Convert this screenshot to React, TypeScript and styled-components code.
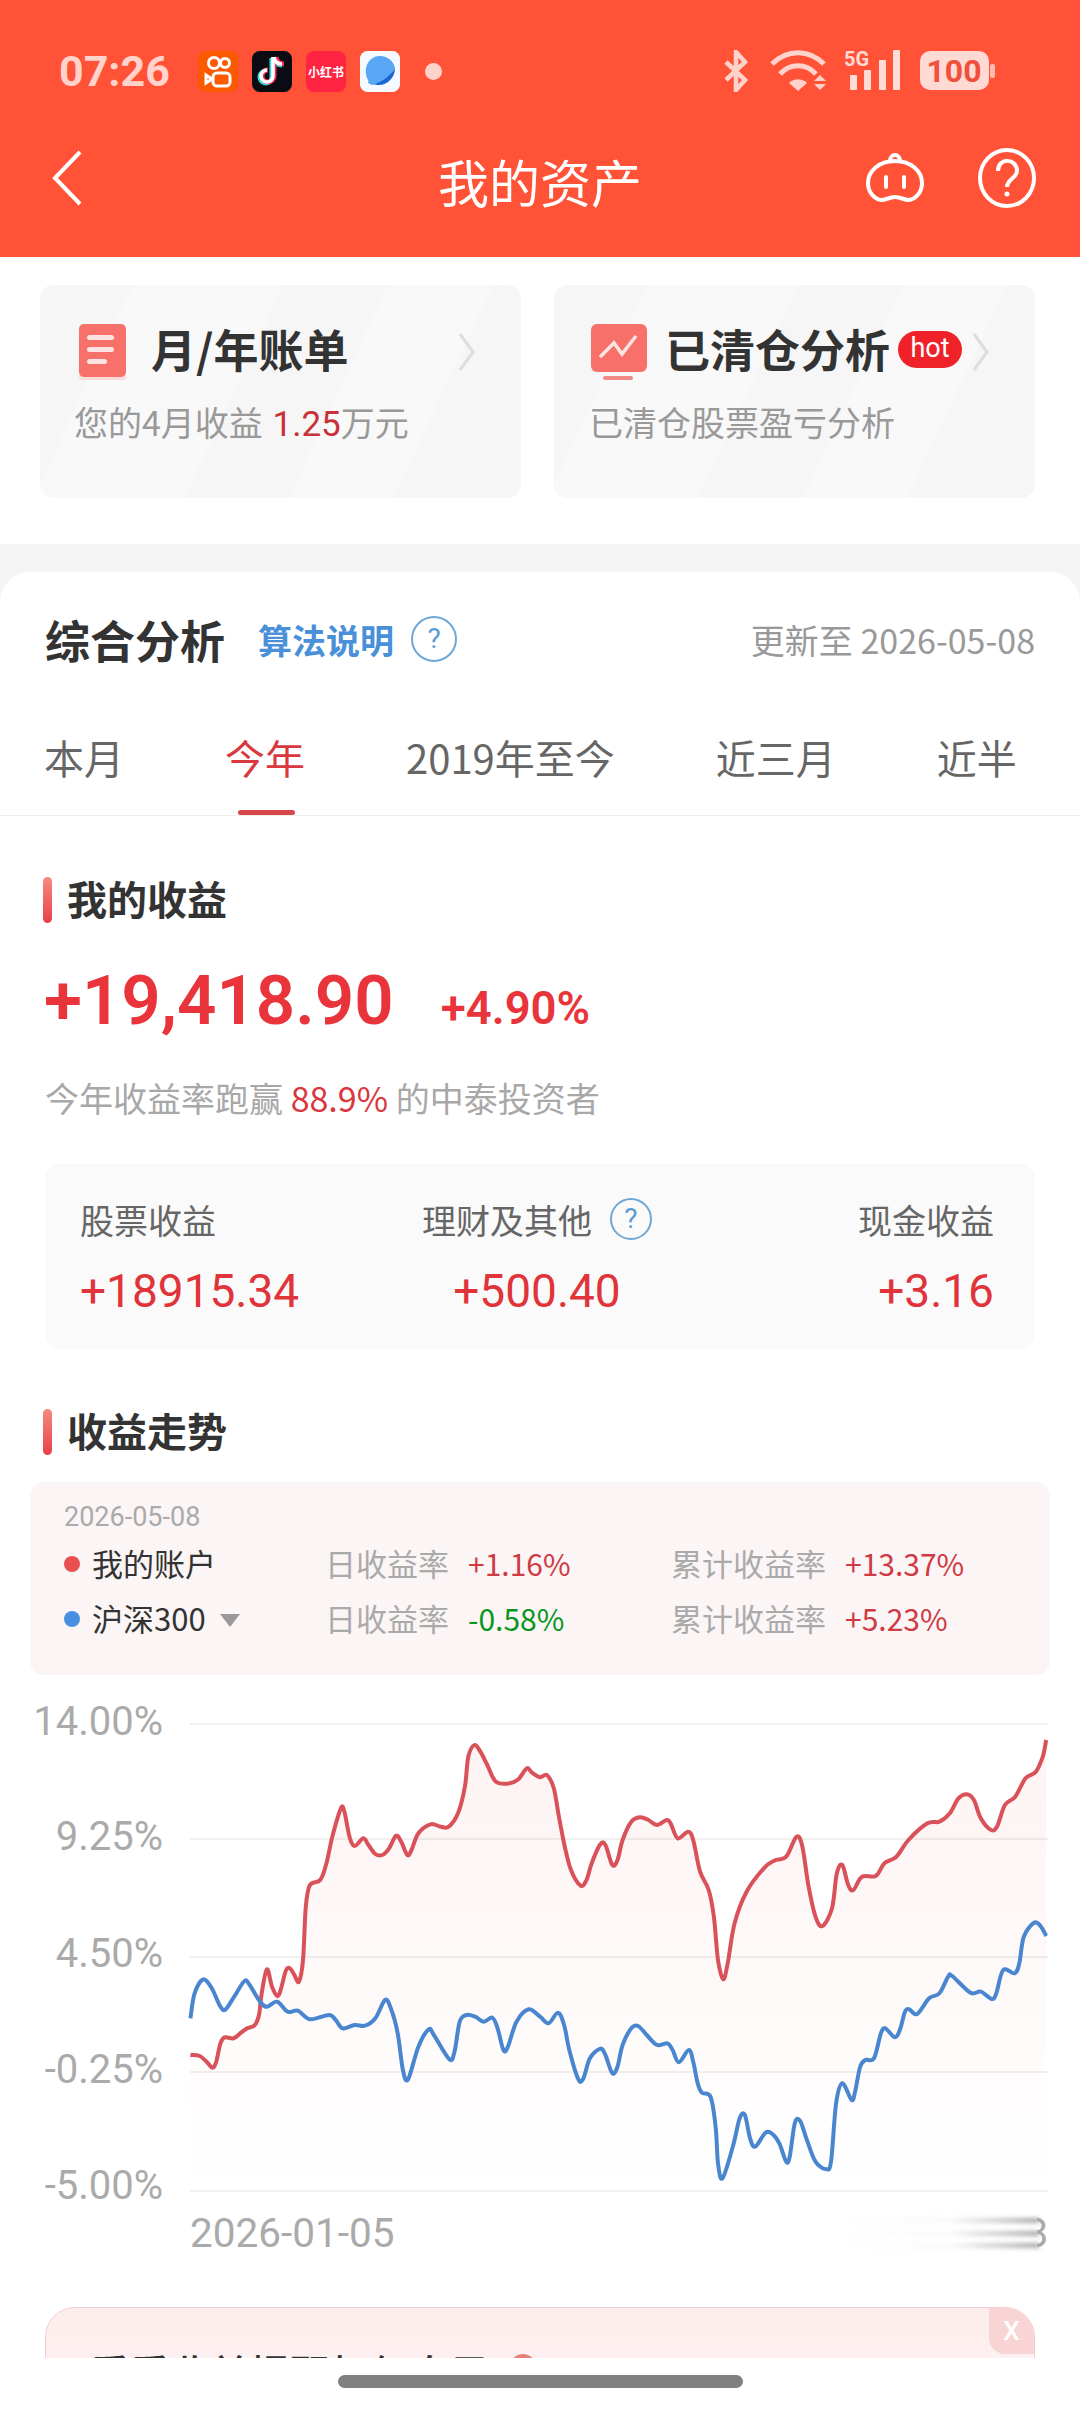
import * as React from 'react';
import styled, { createGlobalStyle } from 'styled-components';

const FONT = `"Noto Sans CJK SC", "Noto Sans", sans-serif`;
const NUM_FONT = `Roboto, "Noto Sans CJK SC", sans-serif`;

const GlobalStyle = createGlobalStyle`
    html, body {
        margin: 0;
        padding: 0;
        background: #fff;
    }
    * {
        box-sizing: border-box;
    }
`

const Page = styled.div`
    width: 1080px;
    height: 2412px;
    display: flex;
    flex-direction: column;
    overflow: hidden;
    background: #fff;
    font-family: ${FONT};
`

const Content = styled.div`
    flex: 1;
    min-height: 0;
    overflow: hidden;
`

const Header = styled.header`
    height: 257px;
    background: #ff5236;
    padding: 50px 44px 0 59px;
    display: flex;
    flex-direction: column;
`

const StatusBar = styled.div`
    height: 42px;
    display: flex;
    align-items: center;
`

const Clock = styled.span`
    font-family: ${NUM_FONT};
    font-size: 43px;
    font-weight: 700;
    color: rgba(255, 255, 255, 0.75);
    width: 139px;
`

const AppIcons = styled.div`
    display: flex;
    gap: 14px;
    align-items: center;
`

const AppIcon = styled.div`
    width: 40px;
    height: 41px;
    border-radius: 8px;
    overflow: hidden;
    display: flex;
    align-items: center;
    justify-content: center;
    font-size: 12px;
    font-weight: 700;
    white-space: nowrap;
    color: #fff;
    background: ${props => props.$color};
`

const StatusDot = styled.span`
    width: 17px;
    height: 17px;
    border-radius: 50%;
    margin-left: 25px;
    background: rgba(255, 255, 255, 0.75);
`

const StatusRight = styled.div`
    margin-left: auto;
    display: flex;
    align-items: center;
    margin-right: 41px;
`

const StatusSlot = styled.span`
    display: flex;
    margin-left: ${props => props.$left}px;
`

const NavBar = styled.nav`
    margin: 53px 0 0 -7px;
    height: 60px;
    display: grid;
    grid-template-columns: 1fr auto 1fr;
    align-items: center;
`

const Title = styled.h1`
    margin: 0 8px 0 0;
    font-size: 51px;
    font-weight: 400;
    color: #fff;
    line-height: 60px;
    padding-top: 6px;
`

const NavRight = styled.div`
    justify-self: end;
    display: flex;
    align-items: center;
    gap: 53px;
`

const CardsSection = styled.section`
    height: 287px;
    padding: 28px 45px 0 40px;
    display: flex;
    gap: 33px;
`

const FeatureCard = styled.div`
    width: 481px;
    height: 213px;
    border-radius: 14px;
    padding: 39px 45px 0 ${props => props.$inset}px;
    background:
        linear-gradient(115deg, transparent 0 60%, rgba(255, 255, 255, 0.28) 60% 78%, transparent 78%),
        linear-gradient(115deg, rgba(255, 255, 255, 0) 0 16%, rgba(255, 255, 255, 0.28) 16% 42%, transparent 42%),
        #f6f6f6;
`

const CardHead = styled.div`
    display: flex;
    align-items: center;
    height: 56px;
`

const CardTitle = styled.span`
    font-size: 45px;
    font-weight: 700;
    line-height: 56px;
    color: #333;
    margin: 0 0 6px ${props => props.$gap}px;
    white-space: nowrap;
`

const HotBadge = styled.span`
    width: 64px;
    height: 37px;
    flex: none;
    border-radius: 19px;
    background: #ee2228;
    color: #fff;
    font-family: ${NUM_FONT};
    font-size: 27px;
    line-height: 34px;
    text-align: center;
    margin: -6px 0 0 8px;
`

const Chevron = styled.svg`
    margin-left: auto;
    flex: none;
`

const CardSub = styled.div`
    margin: 17px 0 0 ${props => props.$left}px;
    font-size: 34px;
    line-height: 50px;
    color: #999;
    white-space: nowrap;
`

const SubAccent = styled.span`
    color: #c6313a;
    font-family: ${NUM_FONT};
    font-size: 35px;
    margin-left: 2px;
`

const Gap = styled.div`
    height: 29px;
    background: #f5f5f5;
`

const Analysis = styled.section`
    margin-top: -1px;
    background: #f5f5f5;
`

const AnalysisInner = styled.div`
    background: #fff;
    border-radius: 30px 30px 0 0;
    padding-top: 34px;
`

const AnalysisHead = styled.div`
    display: flex;
    align-items: center;
    height: 66px;
    padding: 0 45px;
`

const AnalysisTitle = styled.h2`
    margin: 0;
    font-size: 45px;
    font-weight: 700;
    color: #333;
`

const AlgoLink = styled.span`
    margin-left: 33px;
    font-size: 34px;
    font-weight: 700;
    color: #4a90d9;
`

const HelpCircle = styled.span`
    width: ${props => props.$size}px;
    height: ${props => props.$size}px;
    margin-left: ${props => props.$left}px;
    border-radius: 50%;
    border: 2px solid #6fa8d6;
    color: #5b9bd5;
    font-family: ${NUM_FONT};
    font-size: 28px;
    line-height: ${props => props.$size - 4}px;
    text-align: center;
    flex: none;
`

const UpdatedAt = styled.span`
    margin-left: auto;
    font-size: 34px;
    color: #999;
`

const Tabs = styled.div`
    margin-top: 55px;
    height: 89px;
    padding-left: 44px;
    display: flex;
    gap: 101px;
    border-bottom: 1px solid #eee;
    overflow: hidden;
    white-space: nowrap;
`

const Tab = styled.div`
    position: relative;
    font-size: 40px;
    line-height: 60px;
    flex: none;
    color: ${props => (props.$active ? '#d8383e' : '#666')};
    ${props => props.$active && `
        &::after {
            content: '';
            position: absolute;
            left: 13px;
            right: 10px;
            top: 83px;
            height: 5px;
            border-radius: 3px;
            background: #d8484a;
        }
    `}
`

const Block = styled.div`
    padding: 0 45px;
`

const SectionTitle = styled.div`
    display: flex;
    align-items: center;
    height: 46px;
    padding-bottom: 5px;
    margin-top: ${props => props.$top}px;
    font-size: 40px;
    font-weight: 700;
    color: #333;
    &::before {
        content: '';
        align-self: flex-start;
        width: 9px;
        height: 46px;
        margin: 0 15px 0 -2px;
        border-radius: 5px;
        background: linear-gradient(180deg, #f58a80, #e8404a);
    }
`

const BigRow = styled.div`
    display: flex;
    align-items: baseline;
    margin: 38px 0 0 -1px;
    height: 80px;
    line-height: 80px;
    font-family: ${NUM_FONT};
    color: #e8343a;
    font-weight: 600;
`

const BigNumber = styled.span`
    font-size: 69px;
`

const BigPercent = styled.span`
    font-size: 45.5px;
    margin-left: 47px;
`

const Beat = styled.div`
    margin-top: 32px;
    font-size: 34px;
    line-height: 50px;
    color: #a8a8a8;
`

const BeatAccent = styled.span`
    color: #d8383e;
`

const StatsBox = styled.div`
    margin-top: 41px;
    height: 185px;
    border-radius: 14px;
    background: #fafafa;
    padding: 30px 41px 0 35px;
    display: grid;
    grid-template-columns: repeat(3, 1fr);
`

const Stat = styled.div`
    display: flex;
    flex-direction: column;
    align-items: ${props => props.$align};
`

const StatLabel = styled.div`
    display: flex;
    align-items: center;
    height: 50px;
    font-size: 34px;
    color: #666;
`

const StatValue = styled.div`
    margin-top: 20px;
    font-family: ${NUM_FONT};
    font-size: 46px;
    line-height: 54px;
    color: #e0343a;
`

const LegendCard = styled.div`
    margin: 27px 30px 0;
    height: 193px;
    border-radius: 14px;
    background: #fbf5f5;
    padding: 17px 0 0 34px;
`

const LegendDate = styled.div`
    font-family: ${NUM_FONT};
    font-size: 27px;
    line-height: 36px;
    color: #aaa;
`

const LegendRow = styled.div`
    display: grid;
    grid-template-columns: 261px 346px 1fr;
    height: 55px;
    align-items: center;
    font-size: 31px;
`

const LegendName = styled.div`
    display: flex;
    align-items: center;
    color: #333;
`

const LegendDot = styled.span`
    width: 16px;
    height: 16px;
    border-radius: 50%;
    margin: 3px 12px 0 0;
    background: ${props => props.$color};
`

const DropTriangle = styled.span`
    width: 0;
    height: 0;
    margin: 6px 0 0 14px;
    border-left: 10px solid transparent;
    border-right: 10px solid transparent;
    border-top: 13px solid #999;
`

const LegendMetric = styled.div`
    display: flex;
    align-items: center;
    gap: 19px;
    color: #aaa;
`

const MetricValue = styled.span`
    font-size: 30px;
    color: ${props => (props.$down ? '#0a961e' : '#d03a44')};
`

const ChartWrap = styled.div`
    height: 605px;
    margin-top: 25px;
`

const ChartSvg = styled.svg`
    display: block;
`

const Banner = styled.div`
    margin: 2px 45px 0;
    height: 120px;
    border: 1px solid #f6cdcd;
    border-radius: 30px 30px 0 0;
    background: linear-gradient(180deg, #fdecec, #fff6f6);
    position: relative;
    overflow: hidden;
    padding: 40px 0 0 44px;
    display: flex;
    align-items: flex-start;
    font-size: 40px;
    line-height: 48px;
    font-weight: 500;
    color: #333;
`

const BannerDot = styled.span`
    width: 26px;
    height: 26px;
    margin: 6px 0 0 20px;
    border-radius: 50%;
    background: #e98078;
`

const BannerClose = styled.span`
    position: absolute;
    right: 0;
    top: 0;
    width: 45px;
    height: 46px;
    border-radius: 0 0 0 16px;
    background: #f8d4d4;
    color: #fff;
    font-family: ${NUM_FONT};
    font-size: 26px;
    line-height: 46px;
    text-align: center;
`

const BottomBar = styled.div`
    height: 54px;
    flex: none;
    background: #fff;
    padding-top: 17px;
    display: flex;
    justify-content: center;
`

const HomePill = styled.div`
    width: 405px;
    height: 13px;
    border-radius: 7px;
    background: #808080;
`

// traced from the picture: [x, y] in page pixels
const zl = (p: number[][]) => p.map(([x, y]) => [x / 2.904, 1700 + y / 3]);
const zr = (p: number[][]) => p.map(([x, y]) => [540 + x / 2.904, 1700 + y / 3]);

const RED = [
    ...zl([[553,1065],[580,1068],[600,1085],[617,1103],[628,1085],[640,1030],[652,1012],[678,1015],[700,998],[718,985],[740,975],[752,945],[760,880],[775,808],[790,860],[805,888],[815,870],[830,812],[842,805],[855,825],[868,845],[880,780],[888,620],[900,555],[930,540],[948,490],[965,410],[990,325],[1000,335],[1015,410],[1030,438],[1055,415],[1070,435],[1090,462],[1110,465],[1130,445],[1150,407],[1165,425],[1183,465],[1195,450],[1215,400],[1250,373],[1280,380],[1303,380],[1330,340],[1350,260],[1360,170],[1378,135],[1395,155],[1415,195],[1440,245],[1480,250],[1505,238],[1530,205],[1545,218]]),
    ...zr([[0,232],[20,225],[40,265],[55,350],[72,440],[90,510],[118,557],[135,540],[150,490],[175,433],[190,435],[210,495],[225,480],[240,420],[265,365],[290,352],[315,360],[340,375],[368,360],[380,372],[400,415],[430,395],[445,420],[465,515],[490,570],[505,650],[517,780],[532,838],[545,790],[565,670],[600,575],[650,505],[680,482],[715,470],[745,410],[762,440],[780,560],[800,650],[820,678],[848,625],[862,520],[878,495],[895,555],[910,570],[935,530],[975,528],[1000,490],[1035,470],[1070,420],[1125,370],[1160,365],[1190,340],[1215,295],[1240,283],[1260,300],[1280,355],[1310,390],[1328,378],[1350,315],[1380,290],[1410,235],[1440,215],[1460,170],[1470,120]]),
];

const BLUE = [
    ...zl([[553,955],[565,880],[590,838],[615,865],[640,920],[655,928],[680,890],[710,843],[725,855],[755,905],[775,920],[805,905],[835,935],[865,932],[900,958],[955,945],[975,960],[995,985],[1030,975],[1060,977],[1090,955],[1118,900],[1135,925],[1155,1000],[1170,1110],[1185,1138],[1215,1040],[1245,988],[1260,1005],[1305,1078],[1320,1055],[1335,965],[1355,945],[1380,950],[1405,965],[1430,953],[1445,985],[1462,1050],[1475,1040],[1500,965],[1535,928]]),
    ...zr([[0,950],[25,970],[52,938],[70,975],[85,1050],[110,1135],[125,1138],[145,1075],[175,1046],[190,1065],[210,1120],[225,1100],[240,1035],[265,985],[285,978],[310,1005],[340,1035],[370,1030],[385,1050],[403,1087],[432,1050],[445,1085],[458,1150],[470,1178],[495,1190],[510,1280],[517,1390],[530,1435],[560,1340],[580,1255],[595,1245],[610,1315],[625,1340],[655,1298],[675,1302],[695,1330],[715,1385],[725,1370],[740,1270],[755,1262],[775,1320],[800,1385],[830,1407],[845,1385],[860,1210],[878,1150],[905,1200],[915,1175],[930,1100],[945,1080],[970,1075],[990,1000],[1003,985],[1030,1012],[1045,990],[1060,935],[1072,928],[1095,942],[1130,895],[1160,880],[1185,830],[1197,828],[1250,878],[1280,875],[1312,897],[1325,880],[1345,810],[1378,820],[1392,790],[1405,710],[1435,668],[1455,680],[1470,708]]),
];

// catmull-rom through the traced points, so the line stays round
const smooth = (pts: number[][]) => {
    let d = `M${pts[0][0].toFixed(1)} ${pts[0][1].toFixed(1)}`;
    for (let i = 0; i < pts.length - 1; i++) {
        const p0 = pts[i - 1] || pts[i];
        const p1 = pts[i];
        const p2 = pts[i + 1];
        const p3 = pts[i + 2] || p2;
        const c1x = p1[0] + (p2[0] - p0[0]) / 6;
        const c1y = p1[1] + (p2[1] - p0[1]) / 6;
        const c2x = p2[0] - (p3[0] - p1[0]) / 6;
        const c2y = p2[1] - (p3[1] - p1[1]) / 6;
        d += `C${c1x.toFixed(1)} ${c1y.toFixed(1)} ${c2x.toFixed(1)} ${c2y.toFixed(1)} ${p2[0].toFixed(1)} ${p2[1].toFixed(1)}`;
    }
    return d;
};

const GRID = [
    { y: 1724, label: '14.00%', ty: 1735 },
    { y: 1839, label: '9.25%', ty: 1850 },
    { y: 1957, label: '4.50%', ty: 1967 },
    { y: 2072, label: '-0.25%', ty: 2083 },
    { y: 2191, label: '-5.00%', ty: 2199 },
];

const Chart: React.FC = () => {
    const line = smooth(RED);
    const last = RED[RED.length - 1];
    return (
        <ChartSvg width="1080" height="605" viewBox="0 1700 1080 605">
            <defs>
                <linearGradient id="area" x1="0" y1="0" x2="0" y2="1">
                    <stop offset="0" stopColor="#e85050" stopOpacity="0.07" />
                    <stop offset="1" stopColor="#e85050" stopOpacity="0" />
                </linearGradient>
                <linearGradient id="smear" x1="0" y1="0" x2="1" y2="0">
                    <stop offset="0" stopColor="#999" stopOpacity="0" />
                    <stop offset="0.55" stopColor="#999" stopOpacity="0.06" />
                    <stop offset="1" stopColor="#888" stopOpacity="0.75" />
                </linearGradient>
                <filter id="soft" x="-5%" y="-100%" width="110%" height="300%">
                    <feGaussianBlur stdDeviation="2" />
                </filter>
                <clipPath id="lastDigit">
                    <rect x="1037" y="2210" width="12" height="50" />
                </clipPath>
            </defs>
            {GRID.map(g => (
                <g key={g.label}>
                    <line x1="190" x2="1048" y1={g.y} y2={g.y} stroke="#f0f0f0" strokeWidth="2" />
                    <text x="163" y={g.ty} textAnchor="end" fontFamily="Roboto" fontSize="40" fill="#aaa">{g.label}</text>
                </g>
            ))}
            <path d={`${line}L${last[0]} 2191L190 2191Z`} fill="url(#area)" />
            <path d={line} fill="none" stroke="#d9525a" strokeWidth="4" strokeLinejoin="round" />
            <path d={smooth(BLUE)} fill="none" stroke="#4a86cf" strokeWidth="4" strokeLinejoin="round" />
            <text x="190" y="2247" fontFamily="Roboto" fontSize="40.5" fill="#aaa">2026-01-05</text>
            <g filter="url(#soft)">
                <rect x="843" y="2218" width="196" height="5" fill="url(#smear)" />
                <rect x="843" y="2231" width="196" height="5" fill="url(#smear)" />
                <rect x="843" y="2243" width="196" height="5" fill="url(#smear)" />
            </g>
            <text x="1048" y="2247" textAnchor="end" fontFamily="Roboto" fontSize="40" fill="#aaa" clipPath="url(#lastDigit)">8</text>
        </ChartSvg>
    );
};

const Kuaishou = () => (
    <svg width="40" height="41" viewBox="0 0 40 41" fill="none" stroke="#fff" strokeWidth="3">
        <circle cx="16" cy="12" r="5.500" />
        <circle cx="27" cy="12" r="4.500" />
        <rect x="15" y="22" width="17" height="13" rx="4" />
        <path d="M14 28l-6-4v8z" />
    </svg>
);

const TikTok = () => (
    <svg width="30" height="34" viewBox="0 0 30 34" fill="none" strokeWidth="5">
        <path d="M16 3v19a6 6 0 1 1-6-6" stroke="#25e4ea" transform="translate(-1 1)" />
        <path d="M18 3c.5 4 3 7 8 7" stroke="#25e4ea" transform="translate(-1 1)" />
        <path d="M16 3v19a6 6 0 1 1-6-6" stroke="#fe2c55" transform="translate(1 0)" />
        <path d="M18 3c.5 4 3 7 8 7" stroke="#fe2c55" transform="translate(1 0)" />
        <path d="M16 3v19a6 6 0 1 1-6-6" stroke="#fff" strokeWidth="3.600" />
        <path d="M17 3c.5 4 3 7 8 7" stroke="#fff" strokeWidth="3.600" />
    </svg>
);

const Planet = () => (
    <svg width="40" height="41" viewBox="0 0 40 41">
        <rect width="40" height="41" rx="8" fill="#f4faff" />
        <path d="M20 5c8 0 14 6 15 12-5 8-13 15-23 17-2-1-3-2-4-2 1-2 0-3-1-5C3 15 10 5 20 5z" fill="#58a6f4" />
        <path d="M35 17c0 10-8 17-16 17-3 0-5-1-7 0 10-3 18-9 23-17z" fill="#1767d4" />
    </svg>
);

const BluetoothIcon = () => (
    <svg width="24" height="42" viewBox="0 0 24 42" fill="none" stroke="rgba(255,255,255,.75)" strokeWidth="4.500">
        <path d="M2 12l19 18-9 10V2l9 10L2 30" />
    </svg>
);

const WifiIcon = () => (
    <svg width="58" height="42" viewBox="0 0 58 42" fill="none" stroke="rgba(255,255,255,.75)" strokeWidth="5">
        <path d="M2 14c15-15 37-15 52 0" />
        <path d="M10 24c10-11 26-11 36 0" />
        <path d="M19 33c5-5 13-5 18 0l-9 8z" fill="rgba(255,255,255,.75)" stroke="none" />
        <path d="M50 25l6 6H44zM44 34h12l-6 6z" fill="rgba(255,255,255,.75)" stroke="none" />
    </svg>
);

const SignalIcon = () => (
    <svg width="58" height="42" viewBox="0 0 58 42" fill="rgba(255,255,255,.8)">
        <text x="0" y="16" fontFamily="Roboto" fontWeight="700" fontSize="20">5G</text>
        <rect x="6" y="25" width="7" height="15" rx="1" />
        <rect x="20" y="20" width="7" height="20" rx="1" />
        <rect x="35" y="10" width="7" height="30" rx="1" />
        <rect x="49" y="0" width="7" height="40" rx="1" />
    </svg>
);

const BatteryIcon = () => (
    <svg width="75" height="42" viewBox="0 0 75 42">
        <rect x="0" y="1" width="69" height="39" rx="10" fill="rgba(255,255,255,.78)" />
        <rect x="70" y="14" width="5" height="14" rx="2" fill="rgba(255,255,255,.6)" />
        <text x="34" y="32" textAnchor="middle" fontFamily="Roboto" fontWeight="700" fontSize="32" fill="#f0503a">100</text>
    </svg>
);

const BackIcon = () => (
    <svg width="30" height="56" viewBox="0 0 30 56" fill="none" stroke="#fff" strokeWidth="4">
        <path d="M28 2L3 28l25 26" />
    </svg>
);

const RobotIcon = () => (
    <svg width="60" height="54" viewBox="0 0 60 54" fill="none" stroke="#fff" strokeWidth="4">
        <path d="M30 10C14 10 3 20 3 32c0 9 6 16 13 17 4 .5 8-3 14-3s10 3.500 14 3c7-1 13-8 13-17 0-12-11-22-27-22z" />
        <path d="M25 10c0-8 10-8 10 0" />
        <path d="M21 26v10M39 26v10" strokeLinecap="round" />
    </svg>
);

const HelpIcon = () => (
    <svg width="58" height="60" viewBox="0 0 58 60" fill="none" stroke="#fff" strokeWidth="4">
        <ellipse cx="29" cy="30" rx="27" ry="28" />
        <path d="M20 23c0-14 19-13 19 0 0 7-10 8-10 16" />
        <circle cx="29" cy="46" r="2.500" fill="#fff" stroke="none" />
    </svg>
);

const BillIcon = () => (
    <svg width="47" height="56" viewBox="0 0 47 56">
        <rect x="0" y="50" width="47" height="6" rx="3" fill="#fbdcda" />
        <rect width="47" height="53" rx="5" fill="#f8706a" />
        <rect x="8" y="11" width="27" height="5" rx="2.500" fill="#fde4e2" />
        <rect x="8" y="23" width="27" height="5" rx="2.500" fill="#fde4e2" />
        <rect x="8" y="35" width="20" height="5" rx="2.500" fill="#fde4e2" />
    </svg>
);

const TrendIcon = () => (
    <svg width="56" height="56" viewBox="0 0 56 56">
        <rect x="12" y="52" width="30" height="4" rx="2" fill="#f08a86" />
        <rect width="56" height="48" rx="6" fill="#f8706a" />
        <path d="M9 33l14-14 8 11 14-18" fill="none" stroke="#fde4e2" strokeWidth="3.500" />
    </svg>
);

const CardChevron = () => (
    <Chevron width="18" height="40" viewBox="0 0 18 40" fill="none" stroke="#ddd" strokeWidth="3">
        <path d="M2 2l13 18L2 38" />
    </Chevron>
);

const App: React.FC = () => {
    return (
        <Page>
            <GlobalStyle />
            <Content>
                <Header>
                    <StatusBar>
                        <Clock>07:26</Clock>
                        <AppIcons>
                            <AppIcon $color="#fb5a00"><Kuaishou /></AppIcon>
                            <AppIcon $color="#0b0b14"><TikTok /></AppIcon>
                            <AppIcon $color="#ff2442">小红书</AppIcon>
                            <AppIcon $color="#fff"><Planet /></AppIcon>
                        </AppIcons>
                        <StatusDot />
                        <StatusRight>
                            <BluetoothIcon />
                            <StatusSlot $left={22}><WifiIcon /></StatusSlot>
                            <StatusSlot $left={16}><SignalIcon /></StatusSlot>
                            <StatusSlot $left={18}><BatteryIcon /></StatusSlot>
                        </StatusRight>
                    </StatusBar>
                    <NavBar>
                        <BackIcon />
                        <Title>我的资产</Title>
                        <NavRight>
                            <RobotIcon />
                            <HelpIcon />
                        </NavRight>
                    </NavBar>
                </Header>

                <CardsSection>
                    <FeatureCard $inset={39}>
                        <CardHead>
                            <BillIcon />
                            <CardTitle $gap={25}>月/年账单</CardTitle>
                            <CardChevron />
                        </CardHead>
                        <CardSub $left={-5}>您的4月收益 <SubAccent>1.25</SubAccent>万元</CardSub>
                    </FeatureCard>
                    <FeatureCard $inset={37}>
                        <CardHead>
                            <TrendIcon />
                            <CardTitle $gap={18}>已清仓分析</CardTitle>
                            <HotBadge>hot</HotBadge>
                            <CardChevron />
                        </CardHead>
                        <CardSub $left={-2}>已清仓股票盈亏分析</CardSub>
                    </FeatureCard>
                </CardsSection>

                <Gap />
                <Analysis>
                    <AnalysisInner>
                        <AnalysisHead>
                            <AnalysisTitle>综合分析</AnalysisTitle>
                            <AlgoLink>算法说明</AlgoLink>
                            <HelpCircle $size={46} $left={17}>?</HelpCircle>
                            <UpdatedAt>更新至 2026-05-08</UpdatedAt>
                        </AnalysisHead>
                        <Tabs>
                            <Tab>本月</Tab>
                            <Tab $active>今年</Tab>
                            <Tab>2019年至今</Tab>
                            <Tab>近三月</Tab>
                            <Tab>近半</Tab>
                        </Tabs>

                        <Block>
                            <SectionTitle $top={61}>我的收益</SectionTitle>
                            <BigRow>
                                <BigNumber>+19,418.90</BigNumber>
                                <BigPercent>+4.90%</BigPercent>
                            </BigRow>
                            <Beat>今年收益率跑赢 <BeatAccent>88.9%</BeatAccent> 的中泰投资者</Beat>
                            <StatsBox>
                                <Stat $align="flex-start">
                                    <StatLabel>股票收益</StatLabel>
                                    <StatValue>+18915.34</StatValue>
                                </Stat>
                                <Stat $align="center">
                                    <StatLabel>理财及其他<HelpCircle $size={42} $left={18}>?</HelpCircle></StatLabel>
                                    <StatValue>+500.40</StatValue>
                                </Stat>
                                <Stat $align="flex-end">
                                    <StatLabel>现金收益</StatLabel>
                                    <StatValue>+3.16</StatValue>
                                </Stat>
                            </StatsBox>
                            <SectionTitle $top={60}>收益走势</SectionTitle>
                        </Block>

                        <LegendCard>
                            <LegendDate>2026-05-08</LegendDate>
                            <LegendRow>
                                <LegendName><LegendDot $color="#e85050" />我的账户</LegendName>
                                <LegendMetric>日收益率<MetricValue>+1.16%</MetricValue></LegendMetric>
                                <LegendMetric>累计收益率<MetricValue>+13.37%</MetricValue></LegendMetric>
                            </LegendRow>
                            <LegendRow>
                                <LegendName><LegendDot $color="#4a90e2" />沪深300<DropTriangle /></LegendName>
                                <LegendMetric>日收益率<MetricValue $down>-0.58%</MetricValue></LegendMetric>
                                <LegendMetric>累计收益率<MetricValue>+5.23%</MetricValue></LegendMetric>
                            </LegendRow>
                        </LegendCard>

                        <ChartWrap>
                            <Chart />
                        </ChartWrap>

                        <Banner>
                            看看收益提醒如何自己
                            <BannerDot />
                            <BannerClose>X</BannerClose>
                        </Banner>
                    </AnalysisInner>
                </Analysis>
            </Content>
            <BottomBar>
                <HomePill />
            </BottomBar>
        </Page>
    );
};

export default App;
